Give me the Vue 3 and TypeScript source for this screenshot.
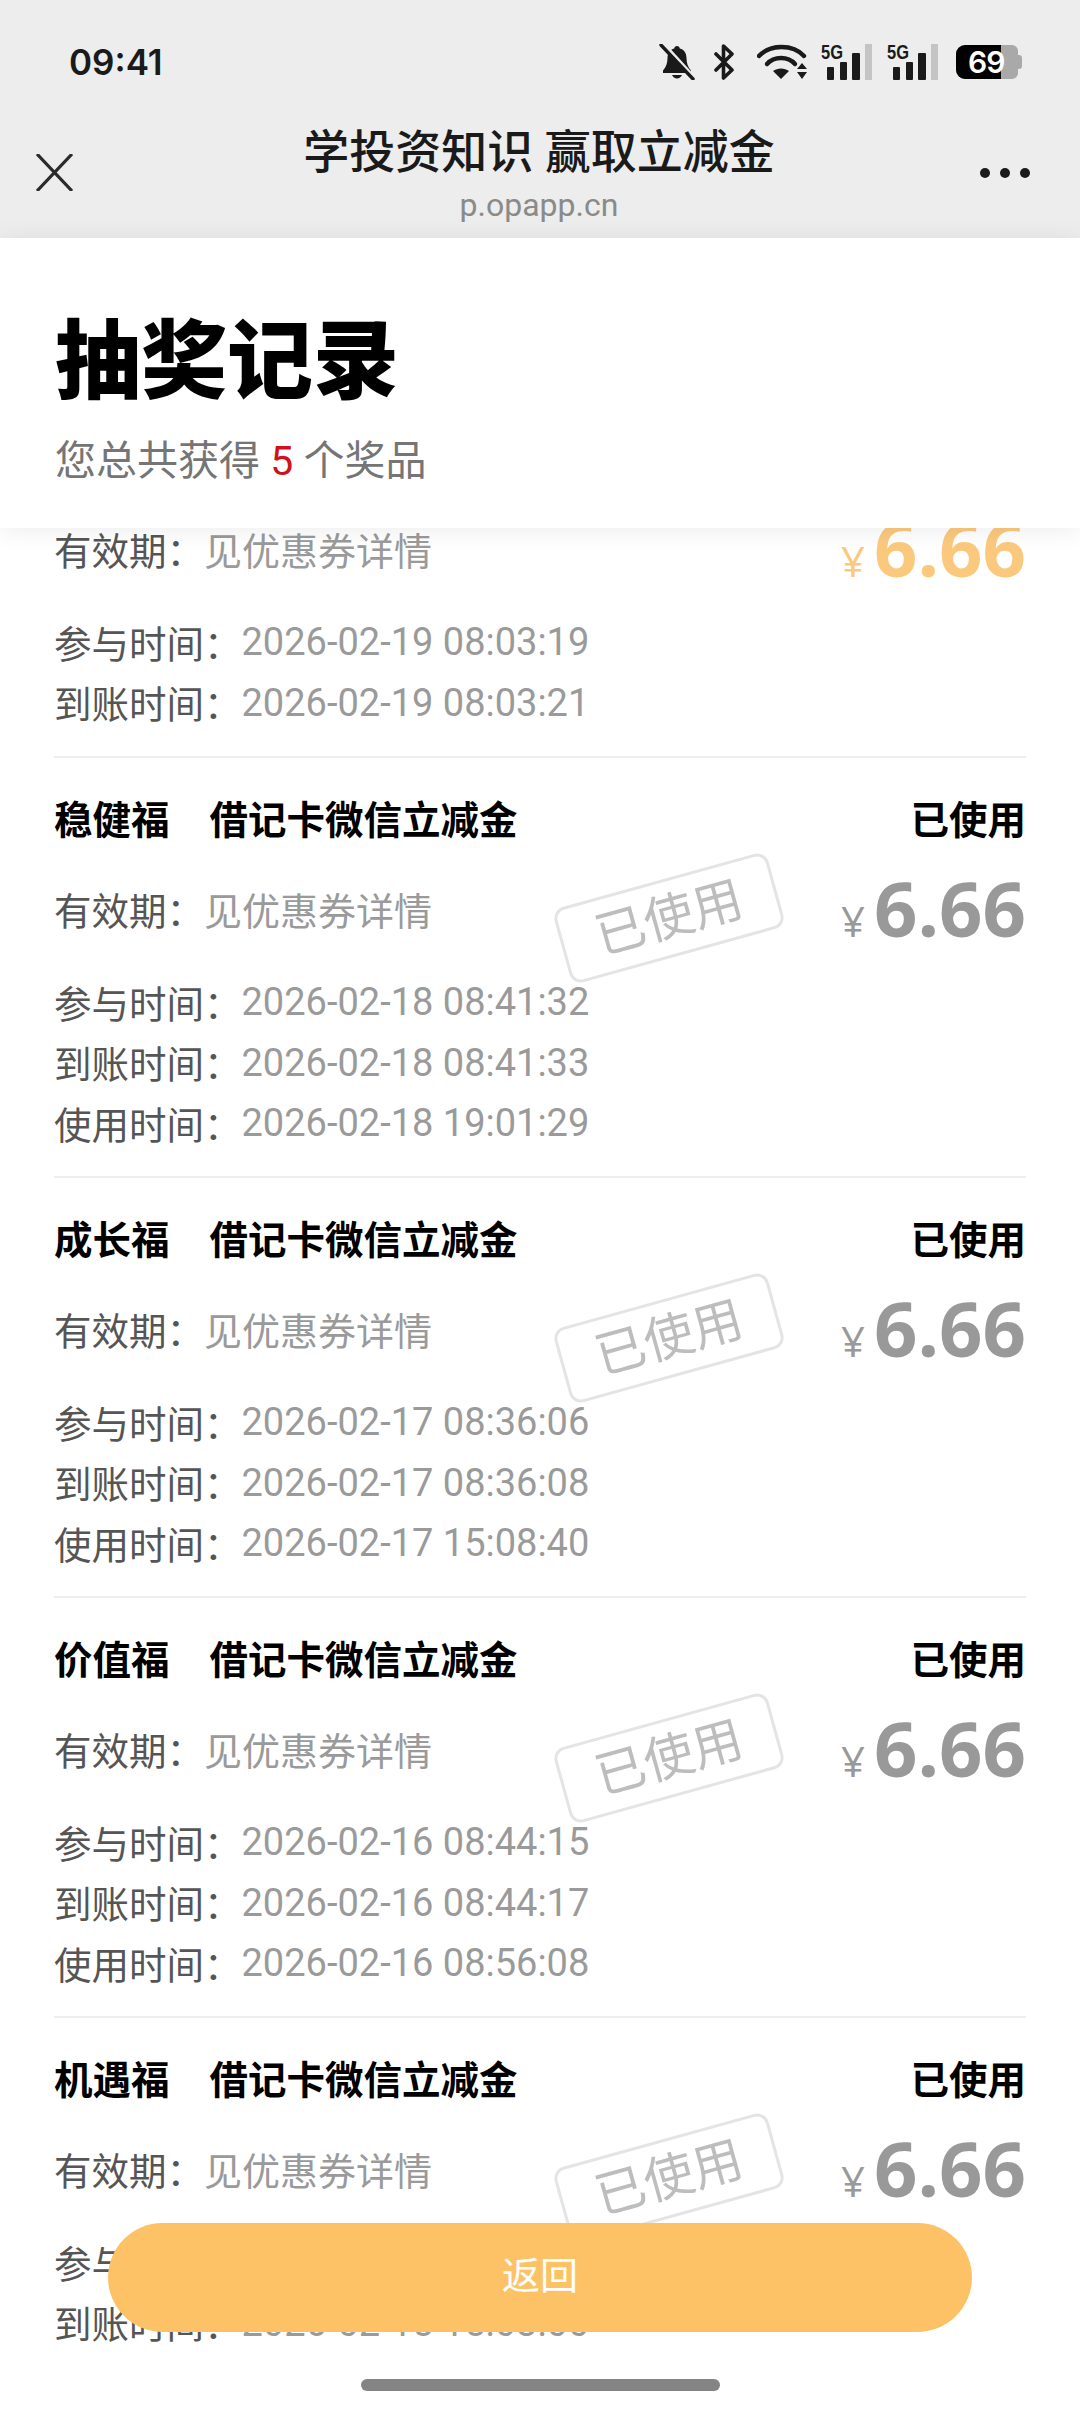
<script setup lang="ts">
interface LotteryRecord {
  name: string;
  status: string;
  joined: string;
  arrived: string;
  used?: string;
}

const records: LotteryRecord[] = [
  { name: "", status: "", joined: "2026-02-19 08:03:19", arrived: "2026-02-19 08:03:21" },
  { name: "稳健福", status: "已使用", joined: "2026-02-18 08:41:32", arrived: "2026-02-18 08:41:33", used: "2026-02-18 19:01:29" },
  { name: "成长福", status: "已使用", joined: "2026-02-17 08:36:06", arrived: "2026-02-17 08:36:08", used: "2026-02-17 15:08:40" },
  { name: "价值福", status: "已使用", joined: "2026-02-16 08:44:15", arrived: "2026-02-16 08:44:17", used: "2026-02-16 08:56:08" },
  { name: "机遇福", status: "已使用", joined: "2026-02-15 15:03:58", arrived: "2026-02-15 15:03:00" },
];
</script>

<template>
  <div class="page">
    <div class="top-bar">
      <div class="status-bar">
        <span class="clock">09:41</span>
        <div class="status-icons">
          <svg class="bell" viewBox="0 0 36 36" width="36" height="36">
            <path d="M18 2c1.600 0 2.600 1 2.800 2.400 4.600 1.200 6.700 5 6.700 9.600 0 5 1.300 9 4.500 12.500V29H4v-2.500C7.200 23 8.500 19 8.500 14c0-4.600 2.500-8.400 6.700-9.600C15.400 3 16.400 2 18 2z" fill="#1a1a1a" />
            <path d="M13 31h10c-.8 2-2.800 3.400-5 3.400s-4.200-1.400-5-3.400z" fill="#1a1a1a" />
            <path d="M5 0l31 34" stroke="#ededed" stroke-width="3" />
            <path d="M2 1l32 34" stroke="#1a1a1a" stroke-width="3.400" stroke-linecap="round" />
          </svg>
          <svg class="bt" viewBox="0 0 22 36" width="22" height="36">
            <path d="M3 10l16 16-8.500 8V2L19 10 3 26" fill="none" stroke="#1a1a1a" stroke-width="3.600" stroke-linejoin="round" stroke-linecap="round" />
          </svg>
          <svg class="wifi" viewBox="0 0 50 36" width="50" height="36">
            <path d="M2 12C13 0 36 0 47 12" fill="none" stroke="#1a1a1a" stroke-width="4.400" stroke-linecap="round" />
            <path d="M10 20c7-8 21-8 28 0" fill="none" stroke="#1a1a1a" stroke-width="4.400" stroke-linecap="round" />
            <path d="M24 35l-8-8c4.500-3.500 11.500-3.500 16 0z" fill="#1a1a1a" />
            <path d="M45 19l5 6H40zM45 35l-5-7h10z" fill="#1a1a1a" />
          </svg>
          <svg v-for="n in 2" :key="n" class="signal" viewBox="0 0 52 36" width="52" height="36">
            <text x="0" y="15" class="net-label" textLength="22" lengthAdjust="spacingAndGlyphs">5G</text>
            <rect x="6" y="23" width="7" height="13" rx="1" fill="#1a1a1a" />
            <rect x="19" y="18" width="7" height="18" rx="1" fill="#1a1a1a" />
            <rect x="31" y="9" width="8" height="27" rx="1" fill="#1a1a1a" />
            <rect x="44" y="0" width="7" height="36" fill="#c4c4c4" />
          </svg>
          <div class="battery">
            <div class="battery-fill"></div>
            <span class="battery-text">69</span>
            <div class="battery-cap"></div>
          </div>
        </div>
      </div>
      <div class="nav-bar">
        <svg class="close" viewBox="0 0 37 37" width="37" height="37">
          <path d="M1 0l35 37M36 0L1 37" stroke="#2b2b2b" stroke-width="3.200" fill="none" />
        </svg>
        <div class="nav-title">
          <div class="nav-name">学投资知识 赢取立减金</div>
          <div class="nav-host">p.opapp.cn</div>
        </div>
        <div class="more">
          <span></span><span></span><span></span>
        </div>
      </div>
    </div>

    <div class="heading">
      <h1>抽奖记录</h1>
      <p>您总共获得 <em>5</em> 个奖品</p>
    </div>

    <div class="list">
      <div v-for="(item, i) in records" :key="i" class="record" :class="{ first: i === 0 }">
        <div v-if="item.name" class="record-title">
          <span class="record-name">{{ item.name }}</span>
          <span class="record-kind">借记卡微信立减金</span>
          <span class="record-status">{{ item.status }}</span>
        </div>
        <div class="record-mid">
          <div class="line">
            <span class="label">有效期：</span><span class="value">见优惠券详情</span>
          </div>
          <div class="amount" :class="{ active: item.status !== '已使用' }">
            <span class="yen">¥</span><span class="num">6.66</span>
          </div>
        </div>
        <div class="times">
          <div class="line"><span class="label">参与时间：</span><span class="value">{{ item.joined }}</span></div>
          <div class="line"><span class="label">到账时间：</span><span class="value">{{ item.arrived }}</span></div>
          <div v-if="item.used" class="line"><span class="label">使用时间：</span><span class="value">{{ item.used }}</span></div>
        </div>
        <div v-if="item.status === '已使用'" class="stamp">已使用</div>
      </div>
    </div>

    <button class="back">返回</button>
    <div class="home-bar"></div>
  </div>
</template>

<style>
html,
body {
  margin: 0;
  background: #fff;
}
</style>

<style scoped>
.page {
  position: relative;
  width: 1080px;
  height: 2412px;
  overflow: hidden;
  display: flex;
  flex-direction: column;
  background: #fff;
  font-family: Roboto, "Noto Sans CJK SC", sans-serif;
}

.top-bar {
  height: 238px;
  flex: none;
  background: #ededed;
}

.status-bar {
  height: 124px;
  padding: 0 62px 0 69px;
  display: flex;
  align-items: center;
  justify-content: space-between;
}

.clock {
  font-family: Inter, Roboto, sans-serif;
  font-size: 35px;
  font-weight: 600;
  color: #1a1a1a;
}

.status-icons {
  display: flex;
  align-items: center;
  gap: 14px;
}

.bt {
  margin-left: 4px;
}

.wifi {
  margin-left: 8px;
}

.signal {
  overflow: visible;
}

.net-label {
  font-family: "Liberation Sans", sans-serif;
  font-size: 20px;
  font-weight: 700;
  fill: #1a1a1a;
}

.battery {
  position: relative;
  width: 62px;
  height: 34px;
  margin-left: 3px;
  background: #a9a9a9;
  border-radius: 9px 6px 6px 9px;
}

.battery-fill {
  position: absolute;
  left: 0;
  top: 0;
  bottom: 0;
  width: 45px;
  background: #000;
  border-radius: 9px 0 0 9px;
}

.battery-text {
  position: absolute;
  left: 12px;
  top: 0;
  line-height: 34px;
  font-family: Inter, Roboto, sans-serif;
  font-size: 30px;
  font-weight: 600;
  letter-spacing: -1px;
  color: #fff;
}

.battery-cap {
  position: absolute;
  right: -4px;
  top: 10px;
  width: 4px;
  height: 14px;
  background: #a9a9a9;
  border-radius: 0 3px 3px 0;
}

.nav-bar {
  height: 114px;
  padding: 0 50px 0 36px;
  display: flex;
  align-items: flex-start;
}

.close {
  flex: none;
  margin-top: 30px;
}

.nav-title {
  flex: 1;
  text-align: center;
  margin-left: 25px;
}

.nav-name {
  font-size: 46px;
  line-height: 52px;
  font-weight: 500;
  color: #1a1a1a;
  margin-top: 2px;
}

.nav-host {
  font-size: 32px;
  line-height: 36px;
  color: #8a8a8a;
  margin-top: 9px;
}

.more {
  flex: none;
  display: flex;
  gap: 10px;
  margin-top: 44px;
}

.more span {
  width: 10px;
  height: 10px;
  border-radius: 50%;
  background: #1a1a1a;
}

.heading {
  position: relative;
  z-index: 2;
  height: 290px;
  flex: none;
  box-sizing: border-box;
  padding: 75px 55px 0;
  background: #fff;
  box-shadow: 0 2px 24px rgba(0, 0, 0, 0.08);
}

.heading h1 {
  margin: 0;
  font-size: 86px;
  line-height: 100px;
  font-weight: 900;
  color: #000;
}

.heading p {
  margin: 20px 0 0;
  font-size: 41px;
  line-height: 56px;
  color: #757575;
}

.heading em {
  font-style: normal;
  color: #d0121b;
}

.list {
  flex: 1;
  min-height: 0;
  overflow: hidden;
  padding: 0 54px;
}

.record {
  position: relative;
  box-sizing: border-box;
  padding-top: 31px;
  height: 420px;
  border-bottom: 2px solid #eeeeee;
}

.record.first {
  padding-top: 0;
  height: 240px;
}

.record-title {
  display: flex;
  align-items: center;
  height: 56px;
  font-size: 38.500px;
  font-weight: 700;
  color: #000;
}

.record-name {
  margin-right: 40px;
}

.record-status {
  margin-left: auto;
}

.record-mid {
  display: flex;
  align-items: center;
  justify-content: space-between;
  height: 60px;
  margin-top: 33px;
}

.first .record-mid {
  margin-top: -10px;
}

.line {
  height: 60.500px;
  display: flex;
  align-items: center;
  font-size: 38px;
}

.label {
  font-size: 37.500px;
  color: #555;
}

.times .label {
  margin-bottom: 2px;
}

.value {
  color: #9a9a9a;
}

.times {
  margin-top: 34px;
}

.amount {
  display: flex;
  align-items: baseline;
  margin-bottom: 2px;
  color: #999;
  font-family: "Open Sans", sans-serif;
}

.amount.active {
  color: #fbc97e;
}

.yen {
  font-size: 42px;
  margin-right: 9px;
  font-weight: 400;
}

.num {
  font-size: 76px;
  font-weight: 700;
}

.stamp {
  position: absolute;
  left: 504px;
  top: 121px;
  width: 222px;
  height: 78px;
  box-sizing: border-box;
  border: 3px solid #e4e4e4;
  border-radius: 12px;
  text-align: center;
  line-height: 72px;
  font-size: 50px;
  color: #bdbdbd;
  transform: rotate(-15.500deg);
}

.back {
  position: absolute;
  left: 108px;
  top: 2223px;
  width: 864px;
  height: 109px;
  padding: 0 0 10px;
  border: none;
  border-radius: 55px;
  background: #fdc266;
  color: #fff;
  font-family: inherit;
  font-size: 38px;
}

.home-bar {
  position: absolute;
  left: 361px;
  top: 2379px;
  width: 359px;
  height: 12px;
  border-radius: 6px;
  background: #848484;
}
</style>
